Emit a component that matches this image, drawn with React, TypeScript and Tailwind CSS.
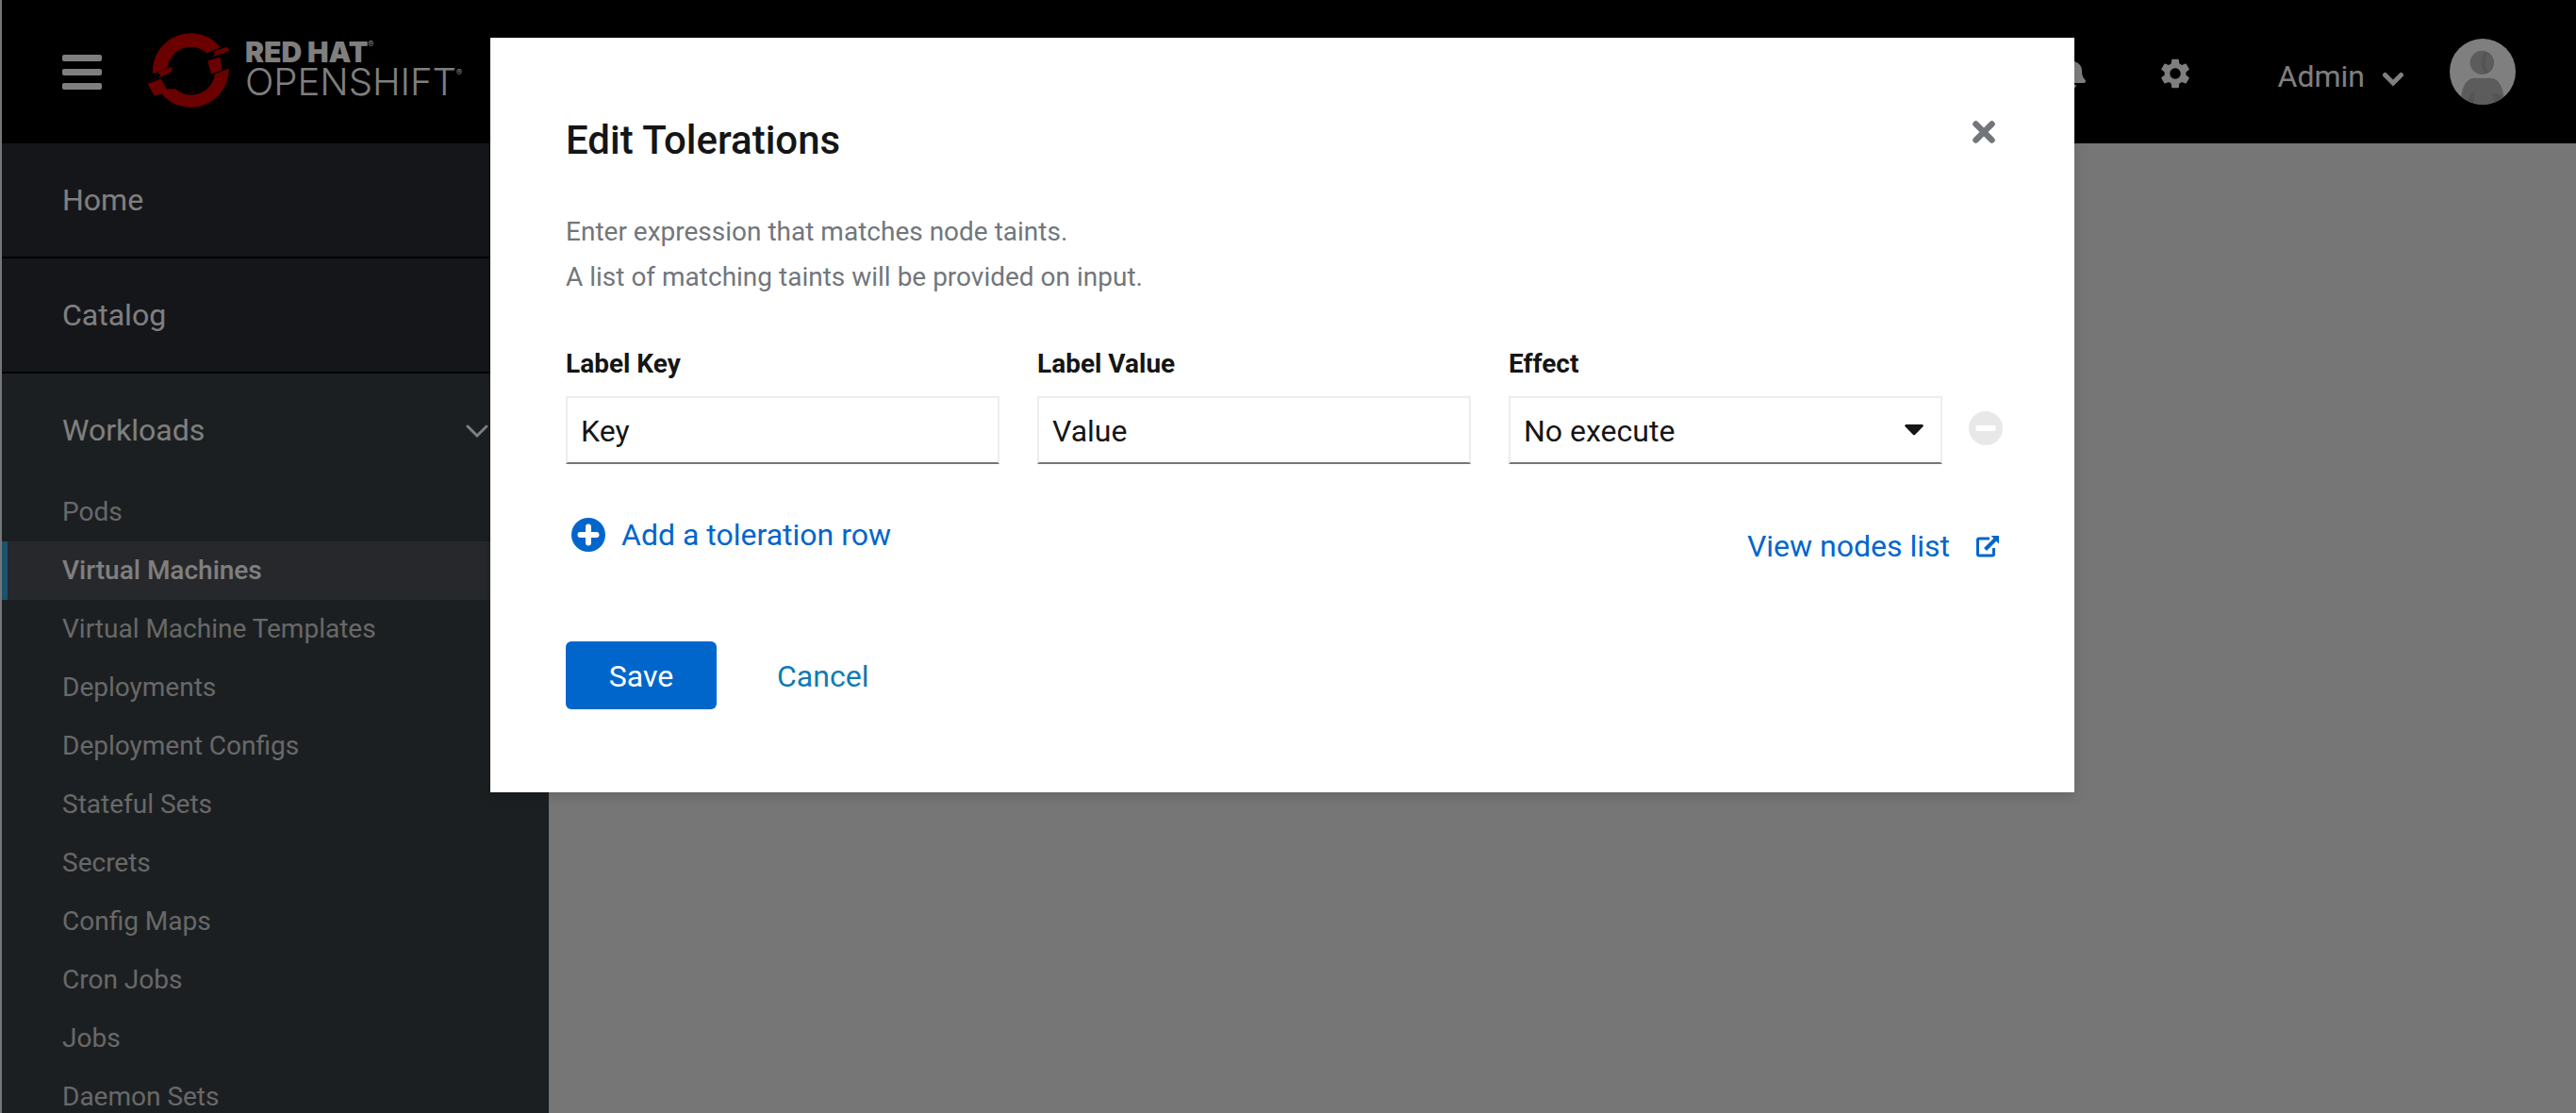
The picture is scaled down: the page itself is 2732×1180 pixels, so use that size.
import type { ReactNode } from "react";
import { FaBell } from "react-icons/fa";
import { MdSettings } from "react-icons/md";

const workloads = [
  "Pods",
  "Virtual Machines",
  "Virtual Machine Templates",
  "Deployments",
  "Deployment Configs",
  "Stateful Sets",
  "Secrets",
  "Config Maps",
  "Cron Jobs",
  "Jobs",
  "Daemon Sets",
];

function OpenShiftMark() {
  return (
    <svg viewBox="50 36 266 250" className="mb-1 h-[83px] w-[88px]" fill="#d40000" aria-hidden="true">
      <path d="M68 172 A122 122 0 0 1 285 88 L242 106 A76 76 0 0 0 115 155 Z" />
      <path d="M262 101 L306 86 L315 99 L260 118 L268 107 Z" />
      <path d="M244 131 L284 119 L290 160 L256 173 Z" />
      <path d="M312 156 A122 122 0 0 1 97 237 L141 221 A76 76 0 0 0 267 173 Z" />
      <path d="M84 167 L131 150 L128 166 L86 186 L93 177 Z" />
      <path d="M52 205 L94 188 L113 221 L141 221 L120 233 L73 242 Z" />
    </svg>
  );
}

function Masthead() {
  return (
    <header className="flex h-[152px] shrink-0 items-center justify-between bg-black px-16 text-white">
      <div className="flex items-center">
        <button type="button" aria-label="Toggle navigation" className="flex w-[42px] flex-col gap-2">
          <span className="h-[7px] rounded-xs bg-white" />
          <span className="h-[7px] rounded-xs bg-white" />
          <span className="h-[7px] rounded-xs bg-white" />
        </button>
        <a href="#home" className="ml-12 flex items-center gap-4">
          <OpenShiftMark />
          <span className="flex flex-col pb-[10px] font-['Inter',sans-serif] leading-8">
            <span className="flex items-start text-[30px] font-black">
              RED HAT<sup className="top-0 text-[9px] leading-4 font-normal">®</sup>
            </span>
            <span className="flex items-start text-[40px] font-light">
              OPENSHIFT<sup className="top-0 text-[9px] leading-3 font-normal">®</sup>
            </span>
          </span>
        </a>
      </div>
      <div className="flex items-center">
        <button type="button" aria-label="Notifications" className="mr-[74px] pt-1">
          <FaBell size={32} />
        </button>
        <button type="button" aria-label="Settings" className="mr-[90px] pt-1">
          <MdSettings size={38} />
        </button>
        <button type="button" className="mr-12 flex items-center gap-[18px] pt-[10px] text-[32px] leading-[48px]">
          Admin
          <svg viewBox="0 0 24 16" className="mt-1.5 h-4 w-6" fill="none" stroke="currentColor" strokeWidth="5" strokeLinecap="round" aria-hidden="true">
            <path d="M3.5 3.5 L12 12 L20.5 3.5" />
          </svg>
        </button>
        <svg viewBox="0 0 210 210" className="size-[70px]" role="img" aria-label="Admin avatar">
          <clipPath id="avatar-clip">
            <circle cx="105" cy="105" r="105" />
          </clipPath>
          <g clipPath="url(#avatar-clip)">
            <rect width="210" height="210" fill="#ffffff" />
            <circle cx="103" cy="76" r="38" fill="#b8b8b8" />
            <path d="M113 41 A38 38 0 0 1 116 112 C98 96 96 60 113 41Z" fill="#a8a8a8" />
            <path d="M122 47 A38 38 0 0 1 125 107 C110 92 112 60 122 47Z" fill="#b8b8b8" />
            <path d="M35 210 C35 160 50 125 80 125 H128 C160 125 173 160 174 210Z" fill="#b8b8b8" />
            <path d="M62 210 C58 190 62 174 78 170 V210Z" fill="#a8a8a8" />
            <path d="M134 174 C160 170 172 190 172 210 H138 C142 196 142 184 134 174Z" fill="#a8a8a8" />
          </g>
        </svg>
      </div>
    </header>
  );
}

function Sidebar() {
  return (
    <nav className="w-[580px] shrink-0 overflow-hidden bg-[#383e42] text-[32px] leading-[48px] text-white">
      <a href="#home" className="block border-b-2 border-black bg-[#2a2c34] px-16 py-9">
        Home
      </a>
      <a href="#catalog" className="block border-b-2 border-black bg-[#2a2c34] px-16 py-9">
        Catalog
      </a>
      <button type="button" aria-expanded="true" className="flex w-full items-center justify-between px-16 pt-9 pb-8">
        Workloads
        <svg viewBox="0 0 24 16" className="mt-0.5 h-4 w-6" fill="none" stroke="currentColor" strokeWidth="3" strokeLinecap="round" aria-hidden="true">
          <path d="M2 3 L12 13 L22 3" />
        </svg>
      </button>
      <ul className="text-[28px] leading-[62px]">
        {workloads.map((name) => (
          <li key={name}>
            {name === "Virtual Machines" ? (
              <a href="#item" aria-current="page" className="block border-l-6 border-[#39a5dc] bg-[#4e5058] pl-[58px] font-medium text-white">
                {name}
              </a>
            ) : (
              <a href="#item" className="block pl-16 text-[#d1d1d1]">
                {name}
              </a>
            )}
          </li>
        ))}
      </ul>
    </nav>
  );
}

function Field({ id, label, children }: { id: string; label: string; children: ReactNode }) {
  return (
    <div className="flex min-w-0 flex-1 flex-col gap-[14px]">
      <label htmlFor={id} className="text-[28px] leading-10 font-bold">
        {label}
      </label>
      {children}
    </div>
  );
}

const control =
  "h-[72px] w-full appearance-none rounded-none border-2 border-[#ededed] border-b-[#72767b] bg-white px-[14px] pt-0.5 text-[32px] outline-none";

function TolerationsDialog() {
  return (
    <section role="dialog" aria-modal="true" aria-labelledby="dialog-title" className="w-full max-w-[1680px] bg-white pt-20 pr-[76px] pb-[88px] pl-20 text-[#151515] shadow-[0_4px_12px_rgba(0,0,0,0.15)]">
      <div className="flex items-start justify-between">
        <h1 id="dialog-title" className="text-[42px] leading-[58px] font-medium">
          Edit Tolerations
        </h1>
        <button type="button" aria-label="Close" className="flex size-10 items-center justify-center text-[#72767b]">
          <svg viewBox="0 0 24 24" className="size-6" stroke="currentColor" strokeWidth="6.5" strokeLinecap="round" aria-hidden="true">
            <path d="M3.5 3.5 L20.5 20.5 M20.5 3.5 L3.5 20.5" />
          </svg>
        </button>
      </div>
      <p className="mt-11 text-[28px] leading-[48px] text-[#72767b]">
        Enter expression that matches node taints.
        <br />
        A list of matching taints will be provided on input.
      </p>
      <div className="mt-12 flex items-end gap-7">
        <div className="flex flex-1 gap-10">
          <Field id="label-key" label="Label Key">
            <input id="label-key" type="text" defaultValue="Key" className={control} />
          </Field>
          <Field id="label-value" label="Label Value">
            <input id="label-value" type="text" defaultValue="Value" className={control} />
          </Field>
          <Field id="effect" label="Effect">
            <div className="relative">
              <select id="effect" className={control}>
                <option>No execute</option>
                <option>No schedule</option>
                <option>Prefer no schedule</option>
              </select>
              <svg viewBox="0 0 20 12" className="pointer-events-none absolute top-[30px] right-5 h-3 w-5" fill="#151515" aria-hidden="true">
                <path d="M1.5 0 H18.5 Q20.6 .4 19.4 2.2 L11.2 10.8 Q10 11.8 8.8 10.8 L.6 2.2 Q-.6 .4 1.5 0Z" />
              </svg>
            </div>
          </Field>
        </div>
        <button type="button" aria-label="Remove toleration" className="mb-5">
          <svg viewBox="0 0 36 36" className="size-9" aria-hidden="true">
            <circle cx="18" cy="18" r="18" fill="#e8e8e8" />
            <rect x="7.5" y="15" width="21" height="6" rx="1" fill="#ffffff" />
          </svg>
        </button>
      </div>
      <div className="mt-12 flex items-start justify-between text-[32px] leading-[54px] text-[#0066cc]">
        <button type="button" className="ml-1.5 flex items-center gap-[17px]">
          <svg viewBox="0 0 36 36" className="size-9" aria-hidden="true">
            <circle cx="18" cy="18" r="18" fill="#0066cc" />
            <path d="M18 9.5 V26.5 M9.5 18 H26.5" stroke="#ffffff" strokeWidth="6" strokeLinecap="round" />
          </svg>
          Add a toleration row
        </button>
        <a href="#nodes" className="mt-3 mr-1 flex items-center gap-7">
          View nodes list
          <svg viewBox="0 0 24 24" className="size-6" fill="none" stroke="currentColor" strokeWidth="3" aria-hidden="true">
            <path d="M14 4 H3 Q1.5 4 1.5 5.5 V20.5 Q1.5 22 3 22 H17 Q18.500 22 18.500 20.500 V14" />
            <path d="M9.500 15.500 L20 5" strokeWidth="4" />
            <path d="M15.500 1 H24 V9.500Z" fill="currentColor" stroke="none" />
          </svg>
        </a>
      </div>
      <div className="mt-[74px] flex gap-16 text-[32px] leading-[70px]">
        <button type="button" className="min-w-40 rounded-md bg-[#0066cc] px-8 pt-0.5 text-white">
          Save
        </button>
        <button type="button" className="pt-0.5 text-[#0f7bb3]">
          Cancel
        </button>
      </div>
    </section>
  );
}

export default function App() {
  return (
    <div className="relative flex h-screen flex-col overflow-hidden border-l-2 border-[#767676] bg-[#ededed] font-['Roboto',sans-serif]">
      <Masthead />
      <div className="flex min-h-0 flex-1">
        <Sidebar />
        <main className="flex-1" />
      </div>
      <div className="absolute inset-0 flex items-start justify-center bg-black/50 pt-10 pr-[14px]">
        <TolerationsDialog />
      </div>
    </div>
  );
}
